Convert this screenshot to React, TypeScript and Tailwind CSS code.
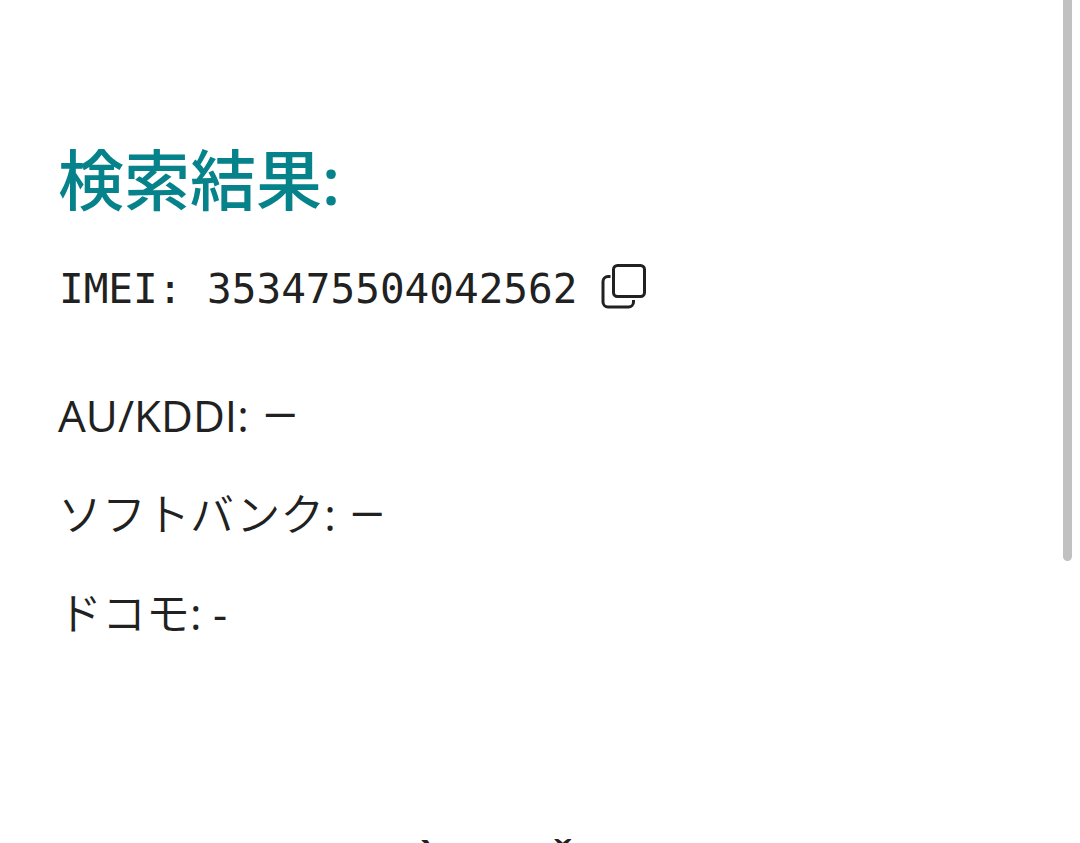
const carriers = [
  { name: 'AU/KDDI', status: '－' },
  { name: 'ソフトバンク', status: '－' },
  { name: 'ドコモ', status: '-' },
];

function CopyIcon() {
  return (
    <svg viewBox="0 0 46 46" className="size-[46px]" fill="none" stroke="currentColor" strokeWidth="3" strokeLinecap="butt" aria-hidden="true">
      <rect x="12.5" y="1.5" width="31" height="31" rx="4" />
      <path d="M9.500 12.500H7a5 5 0 0 0-5 5V38a5 5 0 0 0 5 5h20.500a5 5 0 0 0 5-5v-2" />
    </svg>
  );
}

function Status({ value }: { value: string }) {
  return value === '－' ? (
    <span className="align-[2px] font-['Noto_Sans_CJK_JP',sans-serif] text-[40px] leading-none font-medium">{value}</span>
  ) : (
    <span>{value}</span>
  );
}

export default function App() {
  return (
    <div className="relative h-screen overflow-hidden bg-white text-[#212121]">
      <main className="flex flex-col px-[58px] pt-32">
        <h1 className="font-['Noto_Sans_CJK_JP',sans-serif] text-[66px] leading-[96px] font-medium text-[#06828b]">
          検索結果<span className="font-['Open_Sans',sans-serif] font-semibold">:</span>
        </h1>
        <div className="mt-8 flex items-center gap-6 pl-px">
          <p className="font-['DejaVu_Sans_Mono',monospace] text-[41px] leading-[60px]">IMEI: 353475504042562</p>
          <button type="button" aria-label="IMEIをコピー" className="mb-1">
            <CopyIcon />
          </button>
        </div>
        <ul className="mt-[47px] font-['Open_Sans','Noto_Sans_CJK_JP',sans-serif] text-[44px] leading-[99px]">
          {carriers.map((carrier) => (
            <li key={carrier.name}>
              <span className={/^[A-Z]/.test(carrier.name) ? 'font-normal' : 'font-[350]'}>{carrier.name}</span>:{' '}
              <Status value={carrier.status} />
            </li>
          ))}
        </ul>
        <p className="mt-[162px] flex gap-[119px] pl-[361px] font-['Open_Sans',sans-serif] text-[44px] leading-[60px] font-semibold">
          <span>ˋ</span>
          <span>ˇ</span>
        </p>
      </main>
      <div className="absolute top-0 right-2 h-[561px] w-[9px] rounded-b-full bg-[#c1c1c1]" />
    </div>
  );
}
